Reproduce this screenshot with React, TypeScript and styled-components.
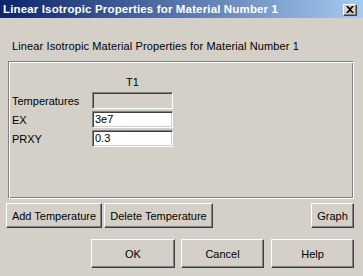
import React from "react";
import styled, { createGlobalStyle } from "styled-components";

const face = "#d4d0c8";

const GlobalStyle = createGlobalStyle`
  html, body {
    margin: 0;
    padding: 0;
    background: ${face};
  }
  body {
    font-family: "Liberation Sans", Arial, sans-serif;
    font-size: 11px;
    color: #000;
  }
`;

const Window = styled.div`
  width: 363px;
  height: 276px;
  background: ${face};
  display: flex;
  flex-direction: column;
  overflow: hidden;
`;

const TitleBar = styled.div`
  height: 18px;
  display: flex;
  align-items: center;
  justify-content: space-between;
  padding: 0 6px 0 3px;
  background: linear-gradient(to right, #0a246a, #a6caf0);
`;

const TitleText = styled.span`
  color: #fff;
  font-weight: bold;
  font-size: 11.5px;
  letter-spacing: 0.15px;
  white-space: nowrap;
`;

const CloseButton = styled.div`
  width: 14px;
  height: 12px;
  box-sizing: border-box;
  background: ${face};
  border-top: 1px solid #fff;
  border-left: 1px solid #fff;
  border-right: 1px solid #404040;
  border-bottom: 1px solid #404040;
  box-shadow: inset -1px -1px 0 #808080;
  display: flex;
  align-items: center;
  justify-content: center;
  margin-top: 1px;
`;

const Body = styled.div`
  flex: 1;
  display: flex;
  flex-direction: column;
  padding: 0 9px 8px 8px;
`;

const Subtitle = styled.div`
  margin: 22px 0 0 4px;
  height: 13px;
  line-height: 13px;
  letter-spacing: 0.12px;
  white-space: nowrap;
`;

const Panel = styled.div`
  margin-top: 8px;
  height: 138px;
  box-sizing: border-box;
  border-top: 1px solid #808080;
  border-left: 1px solid #808080;
  border-right: 1px solid #fff;
  border-bottom: 1px solid #fff;
  box-shadow: inset 1px 1px 0 #fff, inset -1px -1px 0 #808080;
  padding: 14px 0 0 3px;
`;

const Grid = styled.div`
  display: grid;
  grid-template-columns: 80px 81px;
  row-gap: 2px;
  align-items: center;
`;

const ColHeader = styled.div`
  grid-column: 2;
  text-align: center;
  height: 13px;
  line-height: 13px;
  margin-bottom: 1px;
`;

const Label = styled.div`
  grid-column: 1;
  white-space: nowrap;
`;

const Cell = styled.div<{ $disabled?: boolean }>`
  grid-column: 2;
  height: 17px;
  box-sizing: border-box;
  background: ${(p) => (p.$disabled ? face : "#fff")};
  border-top: 1px solid #808080;
  border-left: 1px solid #808080;
  border-right: 1px solid #fff;
  border-bottom: 1px solid #fff;
  box-shadow: inset 1px 1px 0 #404040, inset -1px -1px 0 ${face};
  padding: 0 2px;
  line-height: 15px;
`;

const ButtonRow = styled.div<{ $top: number; $height: number }>`
  display: flex;
  gap: 2px;
  margin-top: ${(p) => p.$top}px;
  height: ${(p) => p.$height}px;
`;

const Spacer = styled.div`
  flex: 1;
`;

const Button = styled.button<{ $w: number; $ml?: number }>`
  width: ${(p) => p.$w}px;
  margin-left: ${(p) => p.$ml ?? 0}px;
  height: 100%;
  box-sizing: border-box;
  background: ${face};
  font-family: "Liberation Sans", Arial, sans-serif;
  font-size: 11px;
  color: #000;
  padding: 0;
  border-top: 1px solid #fff;
  border-left: 1px solid #fff;
  border-right: 1px solid #404040;
  border-bottom: 1px solid #404040;
  box-shadow: inset -1px -1px 0 #808080;
  white-space: nowrap;
`;

const rows = [
  { label: "Temperatures", value: "", disabled: true },
  { label: "EX", value: "3e7" },
  { label: "PRXY", value: "0.3" },
];

export default function App() {
  return (
    <>
      <GlobalStyle />
      <Window>
        <TitleBar>
          <TitleText>Linear Isotropic Properties for Material Number 1</TitleText>
          <CloseButton>
            <svg width="8" height="7" viewBox="0 0 8 7">
              <path d="M0 0 L2 0 L4 2 L6 0 L8 0 L5 3.5 L8 7 L6 7 L4 5 L2 7 L0 7 L3 3.5 Z" fill="#000" />
            </svg>
          </CloseButton>
        </TitleBar>
        <Body>
          <Subtitle>Linear Isotropic Material Properties for Material Number 1</Subtitle>
          <Panel>
            <Grid>
              <ColHeader>T1</ColHeader>
              {rows.map((r) => (
                <React.Fragment key={r.label}>
                  <Label>{r.label}</Label>
                  <Cell $disabled={r.disabled}>{r.value}</Cell>
                </React.Fragment>
              ))}
            </Grid>
          </Panel>
          <ButtonRow $top={4} $height={25}>
            <Button $w={96} $ml={-2}>Add Temperature</Button>
            <Button $w={109}>Delete Temperature</Button>
            <Spacer />
            <Button $w={43}>Graph</Button>
          </ButtonRow>
          <ButtonRow $top={11} $height={29}>
            <Spacer />
            <Button $w={84}>OK</Button>
            <Button $w={83} $ml={4}>Cancel</Button>
            <Button $w={83} $ml={5}>Help</Button>
          </ButtonRow>
        </Body>
      </Window>
    </>
  );
}
